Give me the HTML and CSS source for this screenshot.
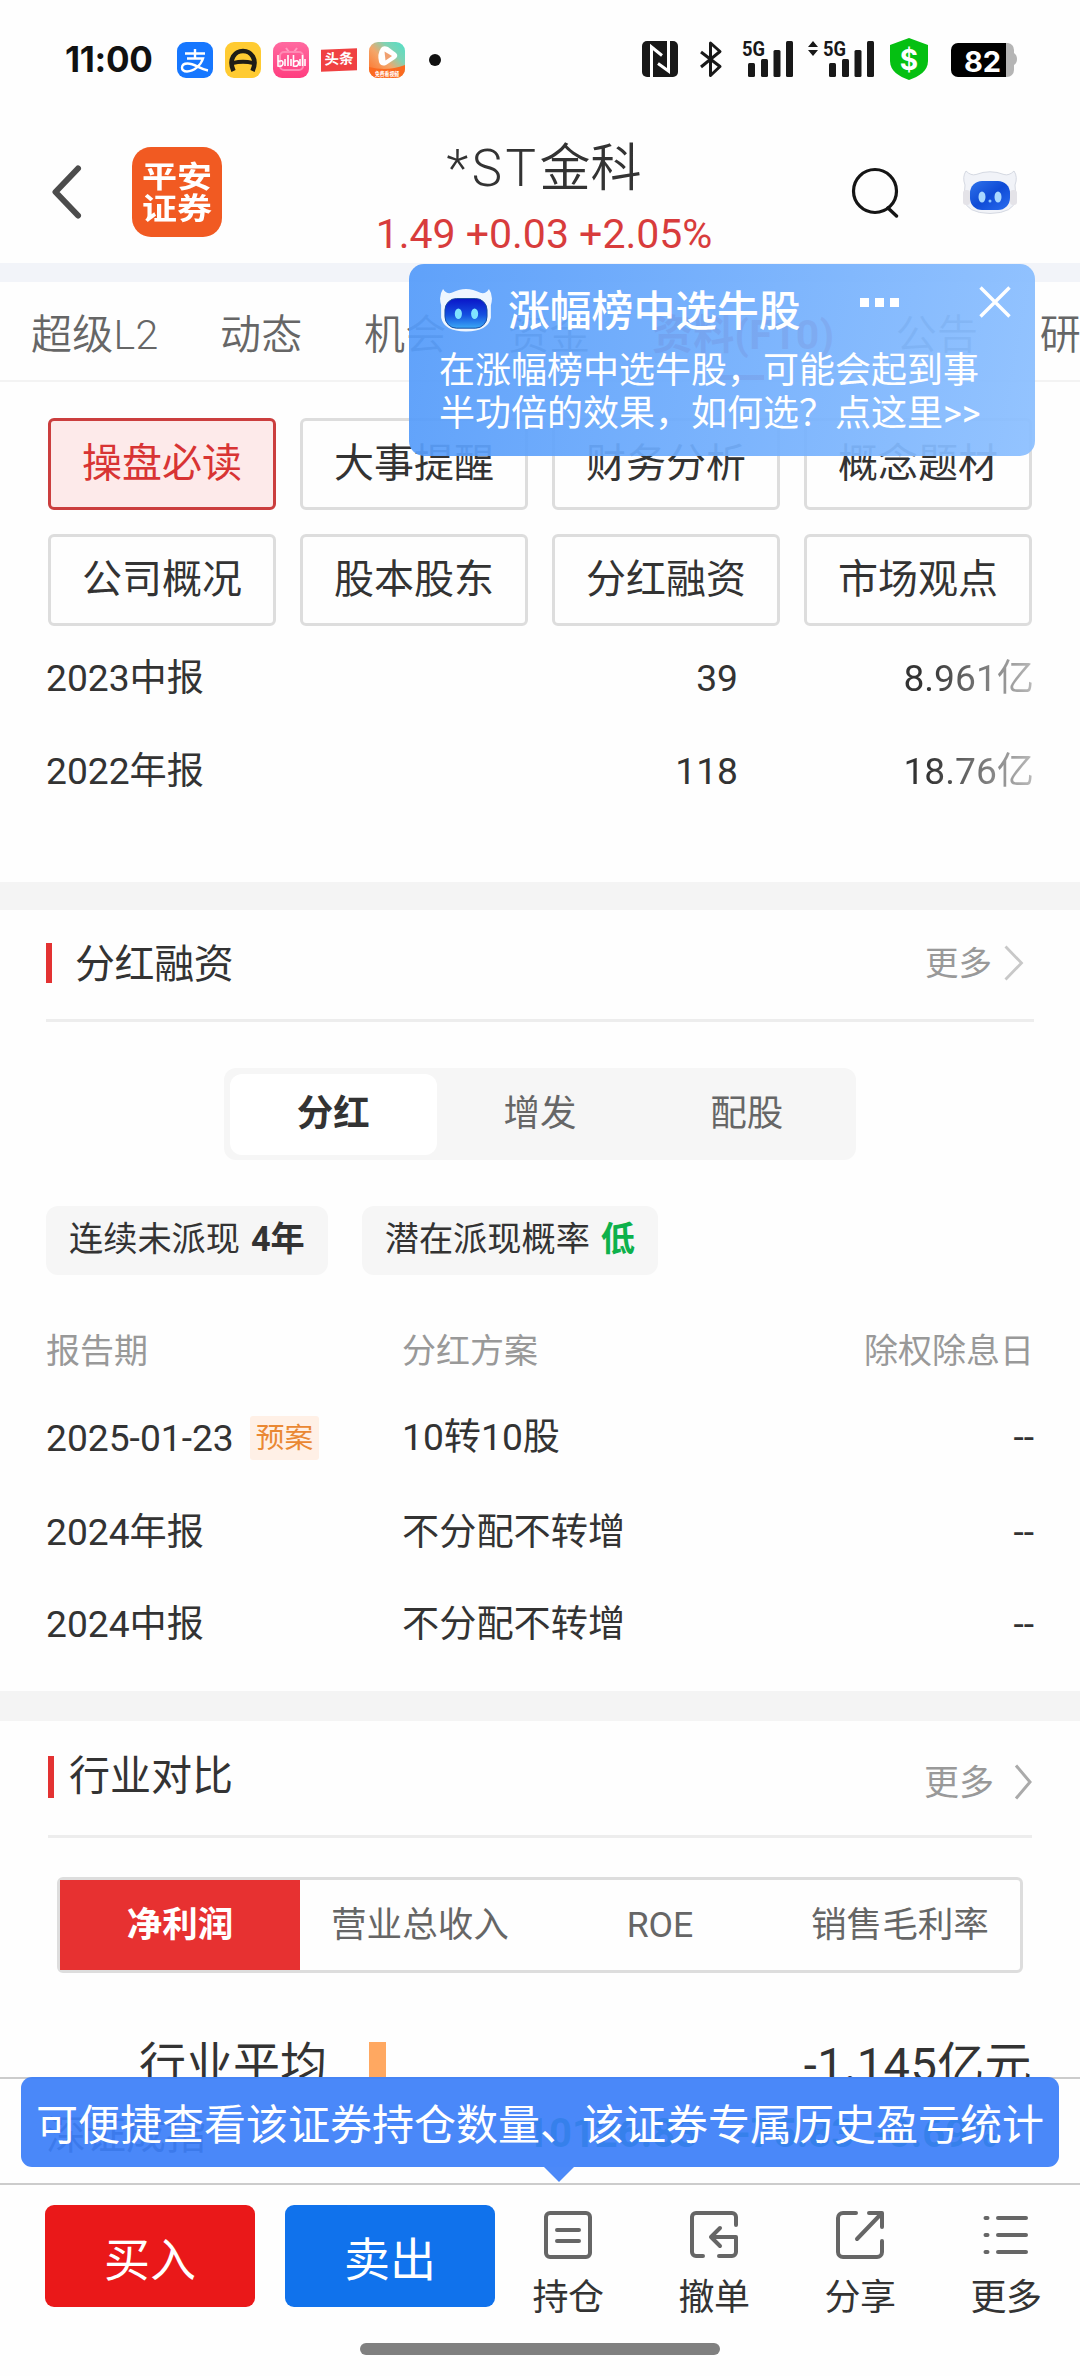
FILE: index.html
```html
<!DOCTYPE html>
<html lang="zh-CN">
<head>
<meta charset="utf-8">
<title>*ST金科</title>
<link rel="stylesheet" href="styles.css">
</head>
<body>
<svg width="0" height="0" class="defs" aria-hidden="true">
  <defs>
    <linearGradient id="visor" x1="0" y1="0" x2="0" y2="1"><stop offset="0" stop-color="#0a14c8"/><stop offset=".55" stop-color="#1450e0"/><stop offset="1" stop-color="#3aa8f5"/></linearGradient>
    <linearGradient id="visor2" x1="0" y1="0" x2="1" y2="1"><stop offset="0" stop-color="#2f73ea"/><stop offset=".5" stop-color="#0f4bd6"/><stop offset="1" stop-color="#2a6df0"/></linearGradient>
    <linearGradient id="vid" x1="0" y1="1" x2="1" y2="0"><stop offset="0" stop-color="#ff6a1f"/><stop offset=".45" stop-color="#f4a66a"/><stop offset=".7" stop-color="#7fd3b4"/><stop offset="1" stop-color="#4fe0c8"/></linearGradient>
    <linearGradient id="pink" x1="0" y1="0" x2="0" y2="1"><stop offset="0" stop-color="#ff6aa0"/><stop offset="1" stop-color="#ff3d7f"/></linearGradient>
  </defs>
</svg>
<div class="page">
  <div class="status">
    <span class="clock">11:00</span>
    <svg class="app" viewBox="0 0 36 36"><rect width="36" height="36" rx="9" fill="#1677ff"/><path d="M8 11.500H28M18 7v9M10 16.500H26C24 23 17 29.500 10 29.500C3 29.500 3.500 21.500 10.500 21.500C18 21.500 22 27 31 28.500" fill="none" stroke="#fff" stroke-width="2.400"/></svg>
    <svg class="app" viewBox="0 0 36 36"><rect width="36" height="36" rx="9" fill="#ffcb32"/><path d="M8.500 29C3 17 10 9 18 9S33 17 27.500 29" fill="none" stroke="#1e1c17" stroke-width="4.600"/><path d="M8 19Q18 16.500 28 19V23Q18 20.500 8 23z" fill="#1e1c17"/></svg>
    <svg class="app" viewBox="0 0 36 36"><rect width="36" height="36" rx="9" fill="url(#pink)"/><path d="M13 6l3 4M24 6l-3 4" stroke="#ff9cc0" stroke-width="2"/><rect x="7" y="10" width="23" height="18" rx="4" fill="none" stroke="#ff8ab4" stroke-width="2"/><path d="M5 13v11q5 1 5-3t-5-1M12 17v7M15 13v11M18 17v7M20.500 13v11q5 1 5-3t-5-1M27 17v7M29.500 13v11M32 17v7" fill="none" stroke="#fff" stroke-width="1.600"/></svg>
    <span class="toutiao">头条</span>
    <svg class="app" viewBox="0 0 36 36"><rect width="36" height="36" rx="9" fill="url(#vid)"/><path d="M0 25Q18 30 36 23V27a9 9 0 0 1-9 9H9a9 9 0 0 1-9-9z" fill="#fb6a20"/><path d="M12 6Q14 3 19 5L27 11Q30 14 26 17L17 23Q12 25 10 20Q8 12 12 6z" fill="#fff"/><path d="M15.500 9.500l7.500 4.500-6.500 4.500z" fill="#f0a070"/><text x="18" y="34" text-anchor="middle" class="vtext" textLength="24" lengthAdjust="spacingAndGlyphs">免费看视频</text></svg>
    <i class="dot"></i>
    <span class="grow"></span>
    <svg class="sys" width="384" height="48" viewBox="636 36 384 48">
      <rect x="642" y="41" width="36" height="36" rx="5" fill="#181818"/>
      <path d="M651.500 77V47L662 55.500M668.500 41V71L658 63.500" fill="none" stroke="#fff" stroke-width="3"/>
      <path d="M701 52l19 14.500-9.500 9V43l9.500 8.500L701 67" fill="none" stroke="#181818" stroke-width="3" stroke-linejoin="round"/>
      <text x="742" y="55.500" class="g5" textLength="23" lengthAdjust="spacingAndGlyphs">5G</text>
      <g fill="#181818"><rect x="748" y="63" width="7" height="14" rx="1.500"/><rect x="761" y="59" width="7" height="18" rx="1.500"/><rect x="773.500" y="50" width="7" height="27" rx="1.500"/><rect x="786" y="41" width="7" height="36" rx="1.500"/>
      <path d="M808 47l5-6 5 6zM808 50l5 6 5-6z"/>
      <rect x="829" y="63" width="7" height="14" rx="1.500"/><rect x="842" y="59" width="7" height="18" rx="1.500"/><rect x="854.500" y="50" width="7" height="27" rx="1.500"/><rect x="867" y="41" width="7" height="36" rx="1.500"/></g>
      <text x="823" y="55.500" class="g5" textLength="23" lengthAdjust="spacingAndGlyphs">5G</text>
      <path d="M909 38l19 7v16c0 10-9 15.500-19 19c-10-3.500-19-9-19-19V45z" fill="#05c012"/>
      <text x="909" y="69.500" class="dollar">$</text>
      <path d="M1006 43h2a7 7 0 0 1 6 7v3q3 2 3 6t-3 6v5a7 7 0 0 1-7 7h-1z" fill="#b5b5b5"/>
      <path d="M958 43h48v34h-48a7 7 0 0 1-7-7V50a7 7 0 0 1 7-7z" fill="#000"/>
      <text x="982.500" y="71.500" class="batt">82</text>
    </svg>
  </div>

  <header class="header">
    <svg class="back" width="32" height="56" viewBox="0 0 32 56"><path d="M27 4.500L4.500 28L27 51.500" fill="none" stroke="#4c4c4c" stroke-width="6" stroke-linecap="round" stroke-linejoin="round"/></svg>
    <div class="logo"><div class="mark">平安<br>证券</div></div>
    <div class="stock"><div class="name"><span>*ST</span>金科</div><div class="price">1.49 +0.03 +2.05%</div></div>
    <svg class="search" width="50" height="52" viewBox="0 0 50 52"><circle cx="25" cy="25" r="21.500" fill="none" stroke="#151515" stroke-width="3.200"/><path d="M38 42l8.500 8" stroke="#151515" stroke-width="3.400" stroke-linecap="round"/></svg>
    <svg class="robot pale" width="56" height="46" viewBox="0 0 56 46"><path d="M3 16Q0 8 4 2Q9 7 14 5.500Q28 0 42 5.500Q47 7 52 2Q56 8 53 16L54 30Q52 44 28 44.500Q4 44 2 30z" fill="#f1f3f8" stroke="#d5d9e2" stroke-width="1"/><rect x="1" y="21" width="7" height="15" rx="3" fill="#e4e3e8"/><rect x="48" y="21" width="7" height="15" rx="3" fill="#e4e3e8"/><rect x="8" y="12" width="40" height="29" rx="12" fill="url(#visor2)"/><ellipse cx="20" cy="28" rx="3.500" ry="5.500" fill="#a9d8ff"/><ellipse cx="36" cy="28" rx="3.500" ry="5.500" fill="#a9d8ff"/><circle cx="28" cy="32" r="1.500" fill="#8cc6ff"/></svg>
  </header>

  <nav class="tabs">
    <span>超级L2</span><span>动态</span><span>机会</span><span>资金</span><span class="on">资料(F10)</span><span>公告</span><span>研</span>
  </nav>

  <main class="main">
    <div class="grid">
      <span class="sel">操盘必读</span><span>大事提醒</span><span>财务分析</span><span>概念题材</span>
      <span>公司概况</span><span>股本股东</span><span>分红融资</span><span>市场观点</span>
    </div>
    <div class="funds">
      <div class="frow"><span>2023中报</span><span>39</span><span class="fade">8.961亿</span></div>
      <div class="frow"><span>2022年报</span><span>118</span><span class="fade">18.76亿</span></div>
    </div>
    <section class="block dividend">
      <div class="head"><i></i><h2>分红融资</h2><span class="more">更多</span><svg width="20" height="36" viewBox="0 0 20 36"><path d="M1.500 1.500L17.500 18L1.500 34.500" fill="none" stroke="#c8c8c8" stroke-width="2.800"/></svg></div>
      <div class="seg"><b>分红</b><span>增发</span><span>配股</span></div>
      <div class="chips"><span>连续未派现 <b>4年</b></span><span>潜在派现概率 <b class="low">低</b></span></div>
      <div class="table">
        <div class="trow th"><span>报告期</span><span>分红方案</span><span>除权除息日</span></div>
        <div class="trow first"><span class="date">2025-01-23<em>预案</em></span><span>10转10股</span><span>--</span></div>
        <div class="trow"><span>2024年报</span><span>不分配不转增</span><span>--</span></div>
        <div class="trow"><span>2024中报</span><span>不分配不转增</span><span>--</span></div>
      </div>
    </section>
    <section class="block industry">
      <div class="head"><i></i><h2>行业对比</h2><span class="more">更多</span><svg width="18" height="36" viewBox="0 0 18 36"><path d="M2 1.500L16 18L2 34.500" fill="none" stroke="#aaa" stroke-width="3"/></svg></div>
      <div class="metric"><b>净利润</b><span>营业总收入</span><span>ROE</span><span>销售毛利率</span></div>
      <div class="avg"><span class="lbl">行业平均</span><i></i><span class="val">-1.145亿元</span></div>
    </section>
  </main>

  <div class="index"><span class="iname">深证成指</span><span class="n1">10126.83</span><span class="n2">-75.83</span><span class="n3">-0.69%</span></div>

  <footer class="toolbar">
    <button class="btn buy">买入</button>
    <button class="btn sell">卖出</button>
    <div class="acts">
      <div><svg viewBox="0 0 50 50"><rect x="3" y="3" width="44" height="44" rx="4"/><path d="M14 20h22M14 31h22"/></svg>持仓</div>
      <div><svg viewBox="0 0 50 50"><path d="M14 46H7a4 4 0 0 1-4-4V7a4 4 0 0 1 4-4h36a4 4 0 0 1 4 4v8M30 46h13a4 4 0 0 0 4-4V27H24M31 18l-9 9 9 9"/></svg>撤单</div>
      <div><svg viewBox="0 0 50 50"><path d="M21 3H8a5 5 0 0 0-5 5v34a5 5 0 0 0 5 5h34a5 5 0 0 0 5-5V31M34 3h13v14M46 4L22 29"/></svg>分享</div>
      <div><svg viewBox="0 0 50 50"><path d="M4.500 8h2M17 8h28M4.500 25h2M17 25h28M4.500 42h2M17 42h28"/></svg>更多</div>
    </div>
    <i class="homebar"></i>
  </footer>

  <aside class="popup">
    <div class="ptop">
      <svg class="robot" width="54" height="44" viewBox="0 0 56 46"><path d="M2 18Q-1 8 4 1Q8 7 13 5Q28 -3 43 5Q48 7 52 1Q57 8 54 18L54 31Q51 45 28 45.500Q5 45 2 31z" fill="#eef6ff"/><rect x="6" y="11" width="44" height="31" rx="12" fill="url(#visor)" stroke="#174d9e" stroke-width="1"/><ellipse cx="20" cy="27" rx="3.700" ry="5.500" fill="#7fe3ff"/><ellipse cx="37" cy="27" rx="3.700" ry="5.500" fill="#7fe3ff"/></svg>
      <strong>涨幅榜中选牛股</strong>
      <span class="dots"><i></i><i></i><i></i></span>
      <svg class="close" width="32" height="32" viewBox="0 0 32 32"><path d="M1.500 1.500L30.500 30.500M30.500 1.500L1.500 30.500" stroke="#fff" stroke-width="3.400"/></svg>
    </div>
    <p>在涨幅榜中选牛股，可能会起到事<br>半功倍的效果，如何选？点这里&gt;&gt;</p>
  </aside>
  <div class="tip">可便捷查看该证券持仓数量、该证券专属历史盈亏统计</div>
</div>
</body>
</html>
```
FILE: styles.css
```css
* { box-sizing: border-box; }
body { margin: 0; background: #fff; color: #333; font-family: Roboto, "Noto Sans CJK SC", sans-serif; line-height: 1.2; }
i, em { font-style: normal; }
h2, p { margin: 0; font-weight: 400; }
svg { display: block; flex: none; }
.defs { position: absolute; }
.page { position: relative; width: 1080px; height: 2376px; display: flex; flex-direction: column; overflow: hidden; background: #fefefe; white-space: nowrap; }

.status { flex: none; height: 120px; padding: 0 60px 0 65px; display: flex; align-items: center; gap: 12px; }
.clock { width: 100px; font: 700 35px/40px Inter, sans-serif; letter-spacing: -.3px; color: #111; padding-bottom: 2px; }
.app { width: 36px; height: 36px; }
.toutiao { width: 36px; height: 22px; background: #f04142; color: #fff; font-size: 14.500px; line-height: 22px; font-weight: 700; text-align: center; transform: skewY(-2deg); }
.vtext { font-size: 6px; fill: #fff; font-weight: 700; }
.dot { width: 12px; height: 12px; border-radius: 50%; background: #111; margin-left: 12px; }
.grow { flex: 1; }
.g5 { font: 700 20px Roboto, sans-serif; fill: #181818; }
.dollar { font: 700 28px Inter, sans-serif; fill: #fff; text-anchor: middle; }
.batt { font: 700 29px Inter, sans-serif; fill: #fff; text-anchor: middle; }

.header { flex: none; height: 143px; display: grid; grid-template-columns: 51px 81px 228px 368px 87px 119px 28px auto; align-items: center; }
.back { grid-column: 2; }
.logo { width: 90px; height: 90px; border-radius: 19px; background: #f15a22; color: #fff; display: grid; place-items: center; }
.mark { font-size: 35px; font-weight: 700; line-height: 37px; transform: scaleY(.86); padding-top: 3px; }
.stock { text-align: center; }
.name { height: 60px; line-height: 62px; font-size: 51px; font-weight: 350; margin-top: 11px; }
.name span { letter-spacing: 3.500px; }
.price { height: 44px; line-height: 44px; font-size: 41px; color: #d83c3c; margin: 14px 0 0; }
.search { grid-column: 6; justify-self: center; }
.pale { grid-column: 8; }

.tabs { flex: none; height: 119px; border-top: 19px solid #f2f4f9; border-bottom: 2px solid #f3f3f3; padding-left: 31px; display: flex; gap: 61.400px; font-size: 41px; line-height: 106px; color: #666; font-weight: 350; letter-spacing: .3px; overflow: hidden; }
.tabs .on { color: #d83c3c; font-weight: 700; position: relative; }
.tabs .on::after { content: ""; position: absolute; left: 62px; top: 93px; width: 50px; height: 5px; background: #d83c3c; }

.main { flex: 1; min-height: 0; overflow: hidden; }
.grid { padding: 36px 48px 0; display: grid; grid-template-columns: repeat(4, 228px); grid-auto-rows: 92px; gap: 24px; }
.grid span { border: 3px solid #ddd; border-radius: 6px; display: grid; place-items: center; font-size: 40px; }
.grid .sel { border-color: #cb3e3e; background: #fdeaea; color: #d83434; }
.funds { height: 256px; padding: 6px 46px 0; font-size: 37.200px; }
.frow { height: 93px; display: grid; grid-template-columns: 340px 352px 296px; align-items: center; }
.frow span + span { text-align: right; }
.fade { color: transparent; background: linear-gradient(90deg, #333 64%, #bbb 100%); -webkit-background-clip: text; background-clip: text; }

.head { display: flex; align-items: center; }
.head h2 { flex: 1; }
.head i { background: #e33232; }
.more { color: #999; }
.dividend { border-top: 28px solid #f4f4f4; padding: 0 46px; height: 809px; }
.dividend .head { height: 112px; border-bottom: 3px solid #ededed; padding: 0 10px 4px 0; }
.dividend .head i { width: 6px; height: 40px; margin-right: 23px; }
.dividend h2 { font-size: 40px; letter-spacing: -.4px; padding-top: 4px; }
.dividend .more { font-size: 33.500px; margin-right: 12px; padding-top: 3px; }
.seg { width: 632px; height: 92px; margin: 46px auto 0; padding: 6px; background: #f6f6f6; border-radius: 12px; display: grid; grid-template-columns: repeat(3, 1fr); font-size: 36.500px; color: #666; }
.seg > * { display: grid; place-items: center; padding-bottom: 2px; }
.seg b { background: #fff; border-radius: 12px; color: #333; height: 81px; }
.chips { margin-top: 46px; display: flex; gap: 34px; }
.chips span { height: 69px; line-height: 67px; padding: 0 23px; background: #f6f6f6; border-radius: 12px; font-size: 34.200px; word-spacing: 2.500px; }
.low { color: #0db14b; }
.table { margin-top: 29px; font-size: 37.200px; }
.trow { height: 92px; display: grid; grid-template-columns: 356px 380px 1fr; align-items: center; }
.trow > :last-child { text-align: right; }
.trow.th { font-size: 34px; color: #999; padding-top: 2px; }
.trow.first { height: 88px; margin-bottom: 2px; padding-bottom: 6px; }
.date { display: flex; align-items: center; padding-top: 3px; }
.trow em { height: 44px; line-height: 44px; padding: 0 6px; margin-left: 16px; background: #fff0e6; color: #ea8833; font-size: 28.700px; border-radius: 3px; }

.industry { border-top: 30px solid #f4f4f4; padding: 0 48px; }
.industry .head { height: 117px; border-bottom: 3px solid #ededed; padding-bottom: 2px; }
.industry .head i { width: 6px; height: 42px; margin-right: 15px; }
.industry h2 { font-size: 41px; }
.industry .more { font-size: 35px; margin-right: 20px; padding-top: 14px; }
.industry .head svg { margin-top: 10px; }
.metric { margin: 39px 9px 0; height: 96px; border: 3px solid #ddd; border-radius: 6px; display: grid; grid-template-columns: repeat(4, 1fr); font-size: 35.600px; color: #666; }
.metric > * { display: grid; place-items: center; }
.metric b { background: #e73131; color: #fff; }
.avg { margin-top: 56px; padding-left: 91px; display: flex; align-items: center; height: 72px; font-size: 47px; }
.avg i { width: 17px; height: 46px; background: #ffa861; margin-left: 42px; }
.avg .val { margin-left: auto; letter-spacing: .4px; }

.index { flex: none; height: 106px; border-top: 2px solid #ccc; padding-left: 46px; display: grid; grid-template-columns: 480px 209px 137px 1fr; align-items: center; font-size: 40px; }
.index span { padding-top: 6px; font-weight: 700; color: #009a55; }
.index .iname { font-weight: 400; color: #555; padding-top: 10px; }

.toolbar { flex: none; height: 193px; border-top: 2px solid #ccc; padding: 20px 0 0 45px; display: flex; position: relative; }
.btn { width: 210px; height: 102px; margin-right: 30px; border: 0; border-radius: 9px; color: #fff; font: 46px/56px Roboto, "Noto Sans CJK SC", sans-serif; padding: 8px 0 0; text-align: center; }
.buy { background: #ea1819; }
.sell { background: #1072ec; }
.acts { display: grid; grid-template-columns: repeat(4, 146px); margin-left: -30px; }
.acts div { display: flex; flex-direction: column; align-items: center; gap: 11px; padding-top: 5px; font-size: 36px; line-height: 54px; letter-spacing: -.4px; }
.acts svg { width: 50px; height: 50px; fill: none; stroke: #666; stroke-width: 4; stroke-linecap: round; stroke-linejoin: round; }
.homebar { position: absolute; left: 360px; bottom: 21px; width: 360px; height: 12px; border-radius: 6px; background: #808080; }

.popup { position: absolute; left: 409px; top: 264px; width: 626px; height: 192px; border-radius: 15px; background: linear-gradient(100deg, rgba(84,155,250,.93), rgba(141,192,255,.94)); color: #fff; padding: 19px 24px 0 30px; }
.ptop { display: flex; height: 54px; align-items: center; }
.ptop strong { margin-left: 15px; font-size: 41.800px; font-weight: 500; line-height: 54px; width: 352px; padding-top: 4px; }
.dots { display: flex; gap: 6px; padding-bottom: 16px; }
.dots i { width: 9px; height: 9px; background: #fff; }
.close { margin-left: auto; margin-bottom: 16px; }
.popup p { margin-top: 13px; font-size: 36px; line-height: 42.500px; }

.tip { position: absolute; left: 21px; top: 2077px; width: 1038px; height: 90px; line-height: 98px; border-radius: 11px; background: rgba(59,126,248,.92); color: #fff; font-size: 42px; text-align: center; }
.tip::after { content: ""; position: absolute; left: 523px; top: 90px; border: 15px solid transparent; border-top-color: #4c89f8; border-bottom: 0; }
```
